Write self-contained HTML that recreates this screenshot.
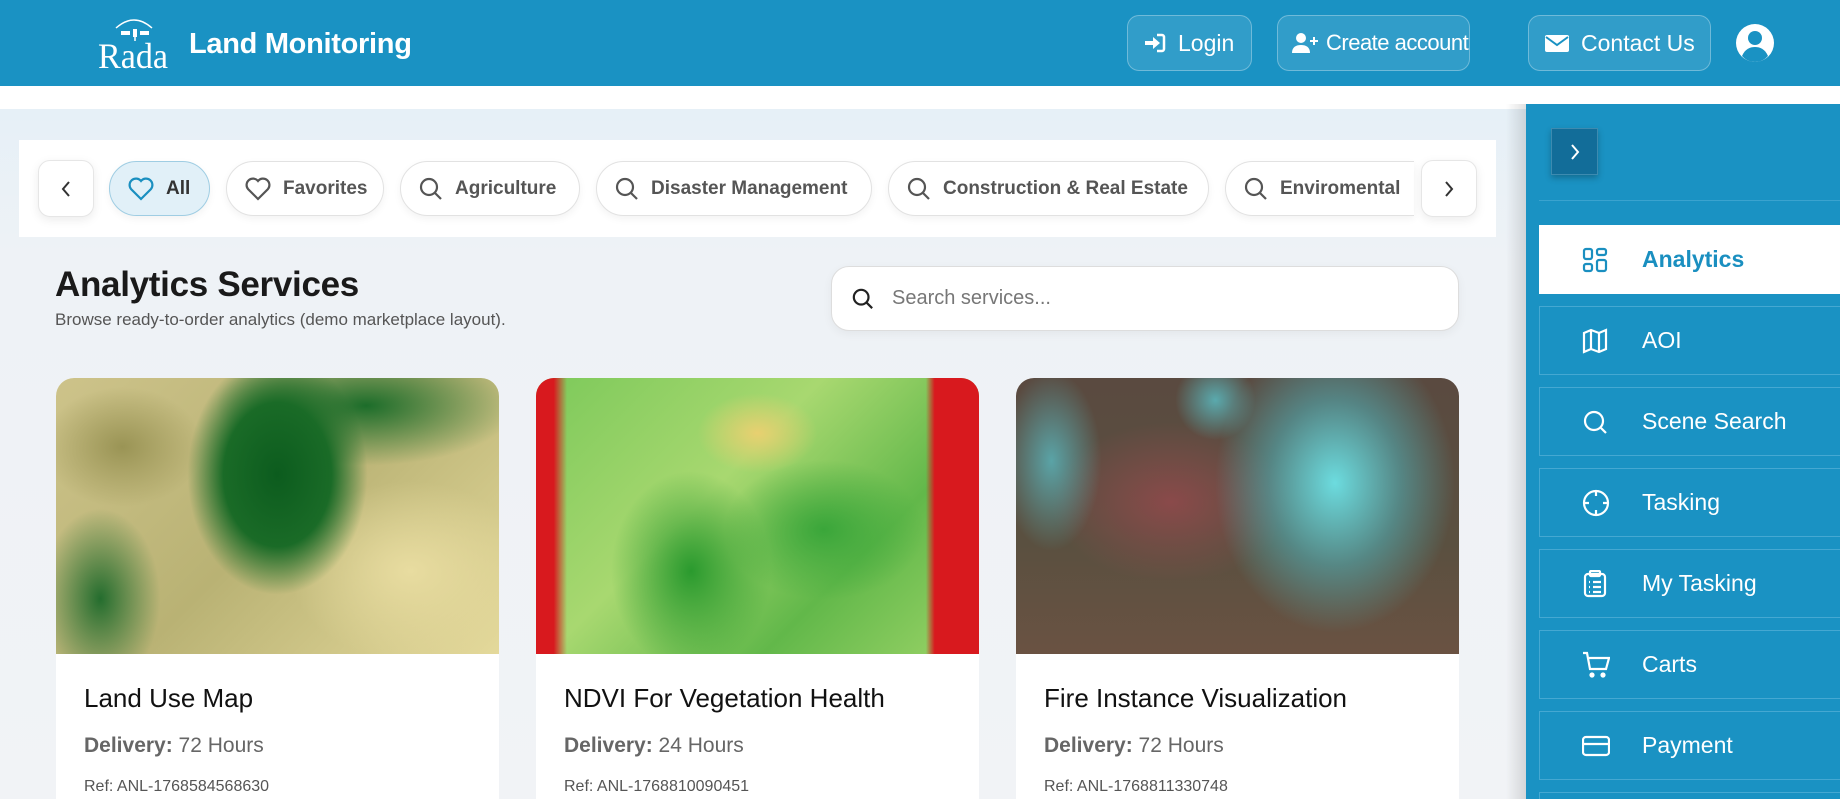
<!DOCTYPE html>
<html style="width:1840px;height:799px;overflow:hidden"><head><meta charset="utf-8"><style>
*{box-sizing:border-box;margin:0;padding:0}
body{width:1840px;height:799px;overflow:hidden;font-family:"Liberation Sans",sans-serif;background:#f2f4f7;position:relative}
.hdr{position:absolute;left:0;top:0;width:1840px;height:86px;background:#1a92c3;box-shadow:0 2px 6px rgba(0,0,0,.15)}
.brand{position:absolute;left:189px;top:28px;color:#fff;font-weight:bold;font-size:29px;letter-spacing:-.3px}
.hbtn{position:absolute;top:15px;height:56px;border:1px solid rgba(255,255,255,.3);background:rgba(255,255,255,.1);border-radius:12px;color:#fff;font-size:23px;display:flex;align-items:center;gap:12px;padding-left:16px;white-space:nowrap;overflow:hidden}
.band{position:absolute;left:0;top:86px;width:1840px;height:23px;background:#fff}
.bg{position:absolute;left:0;top:109px;width:1527px;height:690px;background:linear-gradient(180deg,#e6f0f7 0,#eef2f6 150px,#f1f3f6 100%)}
.fbar{position:absolute;left:19px;top:140px;width:1477px;height:97px;background:#fff}
.chip{position:absolute;top:161px;height:55px;border:1px solid #e2e2e2;border-radius:28px;background:#fff;display:flex;align-items:center;gap:12px;padding-left:18px;font-size:19px;font-weight:bold;color:#555;box-shadow:0 3px 8px rgba(0,0,0,.05);white-space:nowrap;overflow:hidden}
.arr{position:absolute;top:160px;width:56px;height:57px;background:#fff;border:1px solid #e6e6e6;border-radius:12px;box-shadow:0 3px 10px rgba(0,0,0,.08);display:flex;align-items:center;justify-content:center}
h1{position:absolute;left:55px;top:265px;font-size:35px;color:#1a1a1a;font-weight:bold;letter-spacing:-.3px}
.sub{position:absolute;left:55px;top:310px;font-size:17px;color:#555}
.search{position:absolute;left:831px;top:266px;width:628px;height:65px;background:#fff;border:1px solid #ddd;border-radius:18px;box-shadow:0 3px 10px rgba(0,0,0,.05);display:flex;align-items:center;padding-left:20px;gap:18px;font-size:20px;color:#777}
.card{position:absolute;top:378px;width:443px;height:421px;background:#fff;border-radius:18px 18px 0 0;overflow:hidden}
.img{height:276px}
.ct{position:absolute;left:28px;top:305px;font-size:26px;color:#111}
.dl{position:absolute;left:28px;top:356px;font-size:21px;color:#666}
.rf{position:absolute;left:28px;top:400px;font-size:16px;color:#555}
.side{position:absolute;left:1526px;top:104px;width:314px;height:695px;overflow:hidden;background:#1a92c3}
.sh{position:absolute;left:1506px;top:104px;width:20px;height:695px;background:linear-gradient(90deg,rgba(0,0,0,0),rgba(0,0,0,.12))}
.tog{position:absolute;left:25px;top:24px;width:47px;height:47px;background:#126d99;border:1px solid #3d8bb0;box-shadow:0 3px 6px rgba(0,0,0,.25);display:flex;align-items:center;justify-content:center}
.div{position:absolute;left:13px;top:96px;width:301px;height:1px;background:#3aa3cf}
.it{position:absolute;left:13px;width:310px;height:69px;border:1px solid #45a8d2;color:#fff;font-size:23px;display:flex;align-items:center}
.it svg{position:absolute;left:42px}
.it span{position:absolute;left:102px}
</style></head><body>
<div class="hdr">
 <svg style="position:absolute;left:96px;top:12px" width="80" height="60" viewBox="0 0 80 60">
  <path d="M20 16 Q38 0 56 16" fill="none" stroke="#fff" stroke-width="1.5"/>
  <rect x="25" y="19" width="9" height="4" fill="#fff"/><rect x="37" y="17" width="4" height="8" fill="#fff"/><rect x="44" y="19" width="9" height="4" fill="#fff"/>
  <path d="M39 25 L39 29" stroke="#fff" stroke-width="1.5"/>
  <text x="2" y="56" font-family="Liberation Serif,serif" font-size="36" fill="#fff" textLength="70" lengthAdjust="spacingAndGlyphs">Rada</text>
 </svg>
 <div class="brand">Land Monitoring</div>
 <div class="hbtn" style="left:1127px;width:125px"><svg width="22" height="20" viewBox="0 0 22 20"><path d="M1 8h8V4l7 6-7 6v-4H1z" fill="#fff"/><path d="M13 2h5a2 2 0 0 1 2 2v12a2 2 0 0 1-2 2h-5" stroke="#fff" stroke-width="2.5" fill="none"/></svg>Login</div>
 <div class="hbtn" style="left:1277px;width:193px;gap:8px;font-size:22px;letter-spacing:-.5px;padding-left:14px"><svg width="26" height="20" viewBox="0 0 26 20"><circle cx="9" cy="5" r="5" fill="#fff"/><path d="M0 20c0-6 4-8 9-8s9 2 9 8z" fill="#fff"/><path d="M22 4v8M18 8h8" stroke="#fff" stroke-width="2"/></svg>Create account</div>
 <div class="hbtn" style="left:1528px;width:183px"><svg width="24" height="20" viewBox="0 0 24 20"><rect x="0" y="2" width="24" height="17" rx="2" fill="#fff"/><path d="M1 4l11 8 11-8" stroke="#1a92c3" stroke-width="2" fill="none"/></svg>Contact Us</div>
 <svg style="position:absolute;left:1735px;top:23px" width="40" height="40" viewBox="0 0 40 40"><circle cx="20" cy="20" r="19" fill="#fff"/><circle cx="20" cy="15" r="7" fill="#1a92c3"/><path d="M7 33c3-7 8-9 13-9s10 2 13 9a17 17 0 0 1-26 0z" fill="#1a92c3"/></svg>
</div>
<div class="band"></div>
<div class="bg"></div>
<div class="fbar"></div>
<div class="arr" style="left:38px"><svg width="12" height="18" viewBox="0 0 12 18"><path d="M9 2L3 9l6 7" stroke="#333" stroke-width="2" fill="none"/></svg></div>
<div class="chip" style="left:109px;width:101px;background:#e1f0f8;border-color:#9fcde3;color:#333"><svg width="26" height="24" viewBox="0 0 26 24"><path d="M13 22L3 12a6 6 0 0 1 10-8 6 6 0 0 1 10 8z" stroke="#1a8fc0" stroke-width="2.2" fill="none"/></svg>All</div>
<div class="chip" style="left:226px;width:158px"><svg width="26" height="24" viewBox="0 0 26 24"><path d="M13 22L3 12a6 6 0 0 1 10-8 6 6 0 0 1 10 8z" stroke="#555" stroke-width="2.2" fill="none"/></svg>Favorites</div>
<div class="chip" style="left:400px;width:180px"><svg width="24" height="24" viewBox="0 0 24 24"><circle cx="10" cy="10" r="8" stroke="#555" stroke-width="2.2" fill="none"/><path d="M16 16l6 6" stroke="#555" stroke-width="2.2"/></svg>Agriculture</div>
<div class="chip" style="left:596px;width:276px"><svg width="24" height="24" viewBox="0 0 24 24"><circle cx="10" cy="10" r="8" stroke="#555" stroke-width="2.2" fill="none"/><path d="M16 16l6 6" stroke="#555" stroke-width="2.2"/></svg>Disaster Management</div>
<div class="chip" style="left:888px;width:321px"><svg width="24" height="24" viewBox="0 0 24 24"><circle cx="10" cy="10" r="8" stroke="#555" stroke-width="2.2" fill="none"/><path d="M16 16l6 6" stroke="#555" stroke-width="2.2"/></svg>Construction &amp; Real Estate</div>
<div class="chip" style="left:1225px;width:189px;border-radius:28px 0 0 28px;border-right:none"><svg width="24" height="24" viewBox="0 0 24 24"><circle cx="10" cy="10" r="8" stroke="#555" stroke-width="2.2" fill="none"/><path d="M16 16l6 6" stroke="#555" stroke-width="2.2"/></svg>Enviromental</div>
<div class="arr" style="left:1421px"><svg width="12" height="18" viewBox="0 0 12 18"><path d="M3 2l6 7-6 7" stroke="#333" stroke-width="2" fill="none"/></svg></div>
<h1>Analytics Services</h1>
<div class="sub">Browse ready-to-order analytics (demo marketplace layout).</div>
<div class="search"><svg width="22" height="22" viewBox="0 0 24 24"><circle cx="10" cy="10" r="8" stroke="#222" stroke-width="2.4" fill="none"/><path d="M16 16l6 6" stroke="#222" stroke-width="2.4"/></svg>Search services...</div>

<div class="card" style="left:56px"><div class="img" style="background:radial-gradient(ellipse 90px 120px at 50% 35%,#0c5c1e 0,#1a6b27 60%,transparent 100%),radial-gradient(ellipse 150px 60px at 70% 10%,#1c6d2a 0,transparent 100%),radial-gradient(ellipse 60px 90px at 10% 80%,#246d2e 0,transparent 100%),radial-gradient(ellipse 120px 90px at 80% 70%,#e8dca0 0,transparent 100%),radial-gradient(ellipse 80px 60px at 15% 25%,#9a9455 0,transparent 100%),linear-gradient(135deg,#cdc38a,#b9b274 50%,#e4d99b)"></div>
<div class="ct">Land Use Map</div><div class="dl"><b>Delivery:</b> 72 Hours</div><div class="rf">Ref: ANL-1768584568630</div></div>

<div class="card" style="left:536px"><div class="img" style="background:linear-gradient(90deg,#d8191e 0,#d8191e 4%,transparent 7%),linear-gradient(270deg,#d8191e 0,#d8191e 10%,transparent 12%),radial-gradient(ellipse 80px 100px at 35% 70%,#2a9a2e 0,transparent 100%),radial-gradient(ellipse 100px 70px at 65% 55%,#3aa63a 0,transparent 100%),radial-gradient(ellipse 60px 40px at 50% 20%,#e8d070 0,transparent 100%),linear-gradient(135deg,#7cc95a,#a8d870 40%,#62b84a 70%,#9cd468)"></div>
<div class="ct">NDVI For Vegetation Health</div><div class="dl"><b>Delivery:</b> 24 Hours</div><div class="rf">Ref: ANL-1768810090451</div></div>

<div class="card" style="left:1016px"><div class="img" style="background:radial-gradient(ellipse 120px 150px at 72% 38%,rgba(110,235,240,.9) 0,rgba(80,190,200,.5) 55%,transparent 100%),radial-gradient(ellipse 50px 90px at 8% 30%,rgba(90,200,210,.7) 0,transparent 100%),radial-gradient(ellipse 40px 40px at 45% 8%,rgba(90,210,220,.7) 0,transparent 100%),radial-gradient(ellipse 120px 80px at 35% 45%,#8a4a4a 0,transparent 100%),linear-gradient(180deg,#5a4a40,#5a5040 60%,#6a5242)"></div>
<div class="ct">Fire Instance Visualization</div><div class="dl"><b>Delivery:</b> 72 Hours</div><div class="rf">Ref: ANL-1768811330748</div></div>

<div class="sh"></div>
<div class="side">
 <div class="tog"><svg width="12" height="18" viewBox="0 0 12 18"><path d="M3 2l6 7-6 7" stroke="#fff" stroke-width="2" fill="none"/></svg></div>
 <div class="div"></div>
 <div class="it" style="top:121px;background:#fff;border-color:#fff;color:#1a8fc0;font-weight:bold"><svg width="26" height="26" viewBox="0 0 26 26" fill="none" stroke="#1a8fc0" stroke-width="2.2"><rect x="2" y="2" width="8" height="10" rx="2"/><rect x="15" y="2" width="9" height="6" rx="2"/><rect x="2" y="17" width="8" height="7" rx="2"/><rect x="15" y="13" width="9" height="11" rx="2"/></svg><span>Analytics</span></div>
 <div class="it" style="top:202px"><svg width="26" height="26" viewBox="0 0 26 26" fill="none" stroke="#fff" stroke-width="2.2"><path d="M2 5l7-3 8 3 7-3v19l-7 3-8-3-7 3z M9 2v19 M17 5v19"/></svg><span>AOI</span></div>
 <div class="it" style="top:283px"><svg width="26" height="26" viewBox="0 0 26 26" fill="none" stroke="#fff" stroke-width="2.2"><circle cx="12" cy="12" r="9"/><path d="M19 19l5 5"/></svg><span>Scene Search</span></div>
 <div class="it" style="top:364px"><svg width="28" height="28" viewBox="0 0 28 28" fill="none" stroke="#fff" stroke-width="2.2"><circle cx="14" cy="14" r="12"/><path d="M14 2v5M14 21v5M2 14h5M21 14h5"/></svg><span>Tasking</span></div>
 <div class="it" style="top:445px"><svg width="26" height="28" viewBox="0 0 26 28" fill="none" stroke="#fff" stroke-width="2.2"><rect x="3" y="4" width="20" height="22" rx="3"/><rect x="8" y="1" width="10" height="5" rx="1"/><path d="M7 12h1M11 12h8M7 17h1M11 17h8M7 22h1M11 22h8"/></svg><span>My Tasking</span></div>
 <div class="it" style="top:526px"><svg width="28" height="28" viewBox="0 0 28 28" fill="none" stroke="#fff" stroke-width="2.2"><path d="M1 2h4l3 16h16l3-11H7"/><circle cx="10" cy="24" r="1.5" fill="#fff"/><circle cx="21" cy="24" r="1.5" fill="#fff"/></svg><span>Carts</span></div>
 <div class="it" style="top:607px"><svg width="28" height="24" viewBox="0 0 28 24" fill="none" stroke="#fff" stroke-width="2.2"><rect x="1" y="3" width="26" height="18" rx="3"/><path d="M1 10h26"/></svg><span>Payment</span></div>
 <div class="it" style="top:688px;height:7px;border-bottom:none"></div>
</div>
</body></html>
